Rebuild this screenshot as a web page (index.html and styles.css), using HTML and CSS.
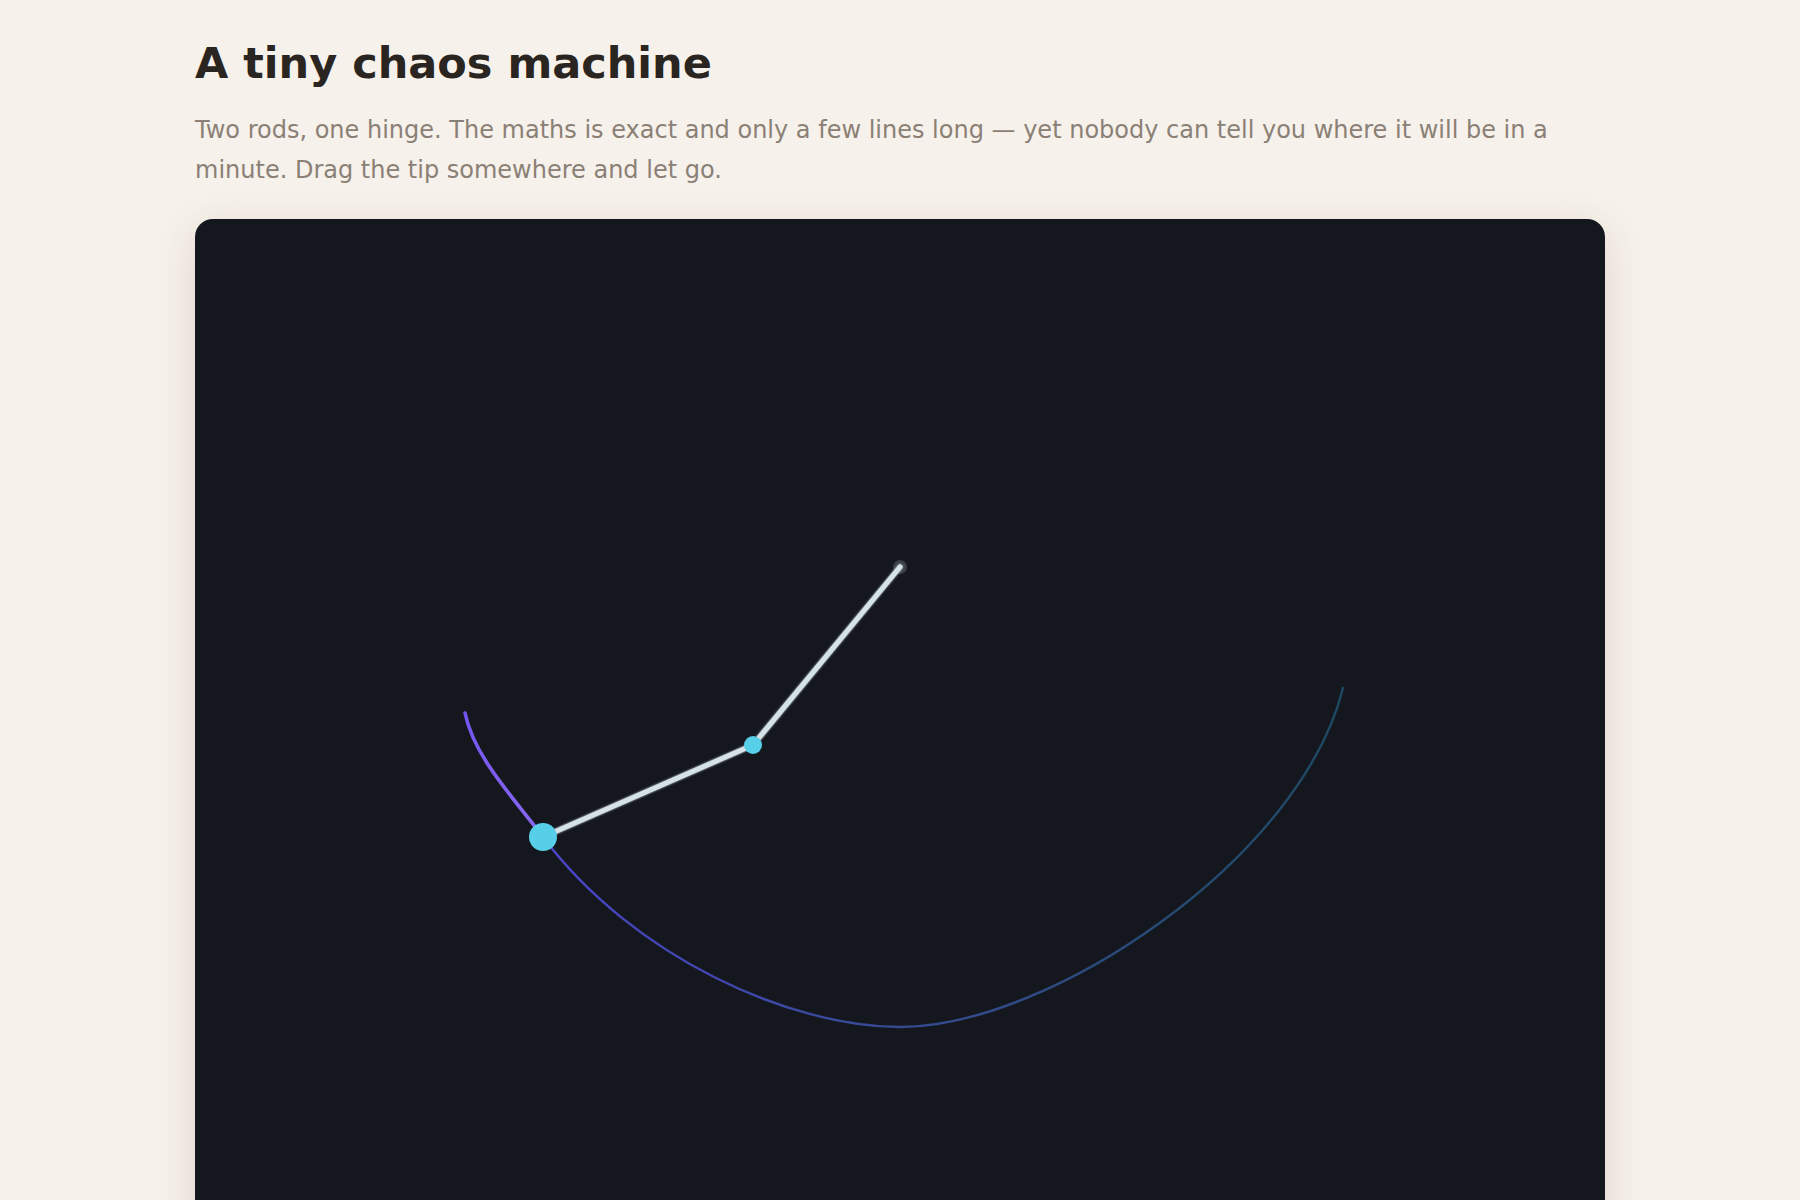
FILE: index.html
```html
<!DOCTYPE html>
<html lang="en">
<head>
  <meta charset="UTF-8">
  <meta name="viewport" content="width=device-width, initial-scale=1.0">
  <title>A tiny chaos machine</title>
  <link rel="stylesheet" href="styles.css">
</head>
<body>
  <main class="page">
    <h1 class="title">A tiny chaos machine</h1>
    <p class="lede">Two rods, one hinge. The maths is exact and only a few lines long — yet nobody can tell you where it will be in a minute. Drag the tip somewhere and let go.</p>

    <!-- Pendulum stage: pivot sits at (705, 348), both rods 230 long -->
    <div class="stage">
      <svg class="scene" viewBox="0 0 1410 1020" preserveAspectRatio="xMidYMin slice">
        <defs>
          <linearGradient id="trailFade" gradientUnits="userSpaceOnUse" x1="1148" y1="0" x2="270" y2="0">
            <stop offset="0" stop-color="#22597a" stop-opacity="0.75"/>
            <stop offset="0.5" stop-color="#3a50a0" stop-opacity="0.9"/>
            <stop offset="0.88" stop-color="#4a44c6"/>
            <stop offset="1" stop-color="#5a48d8"/>
          </linearGradient>
          <linearGradient id="trailHot" gradientUnits="userSpaceOnUse" x1="270" y1="494" x2="348" y2="618">
            <stop offset="0" stop-color="#7355ee"/>
            <stop offset="1" stop-color="#8a68f2"/>
          </linearGradient>
          <filter id="glow" x="-20%" y="-20%" width="140%" height="140%">
            <feGaussianBlur stdDeviation="1" result="b"/>
            <feMerge><feMergeNode in="b"/><feMergeNode in="SourceGraphic"/></feMerge>
          </filter>
        </defs>

        <!-- older trail of the tip: right swing, bottom, back up past the bob -->
        <path class="trail" stroke="url(#trailFade)"
          d="M1148 469 C1106 639 855 808 705 808
             C595 808 438 738 348 618
             C318 578 279 538 270 494"/>
        <!-- most recent swing -->
        <path class="trail trail-hot" stroke="url(#trailHot)"
          d="M348 618 C318 578 279 538 270 494"/>

        <circle class="pivot" cx="705" cy="348" r="7"/>

        <g class="rods" filter="url(#glow)">
          <line x1="705" y1="348" x2="558" y2="526"/>
          <line x1="558" y1="526" x2="348" y2="618"/>
        </g>

        <circle class="bob" cx="558" cy="526" r="9"/>
        <circle class="bob" cx="348" cy="618" r="14"/>
      </svg>
    </div>
  </main>
</body>
</html>
```

FILE: styles.css
```css
/* Page */
* {
  margin: 0;
  padding: 0;
  box-sizing: border-box;
}

body {
  font-family: 'DejaVu Sans', 'Noto Sans', sans-serif;
  background-color: #f6f1eb;
  color: #2a2520;
}

.page {
  max-width: 1410px;
  margin: 0 auto;
  padding-top: 38px;
}

.title {
  font-size: 43px;
  line-height: 1.2;
  font-weight: 700;
  color: #2a2520;
  margin-bottom: 20px;
}

.lede {
  font-size: 24px;
  line-height: 40px;
  color: #8b8075;
  margin-bottom: 29px;
}

/* Stage */
.stage {
  height: 1020px;
  background-color: #14171d;
  border-radius: 18px;
  overflow: hidden;
  box-shadow: 0 10px 40px rgba(90, 60, 30, 0.14);
}

.scene {
  display: block;
  width: 100%;
  height: 100%;
}

.trail {
  fill: none;
  stroke-width: 2.4;
  stroke-linecap: round;
}

.trail-hot {
  stroke-width: 3.6;
}

.rods line {
  stroke: #d6e3e6;
  stroke-width: 5;
  stroke-linecap: round;
}

.pivot {
  fill: #3a3f48;
}

.bob {
  fill: #57cfe9;
}
```
